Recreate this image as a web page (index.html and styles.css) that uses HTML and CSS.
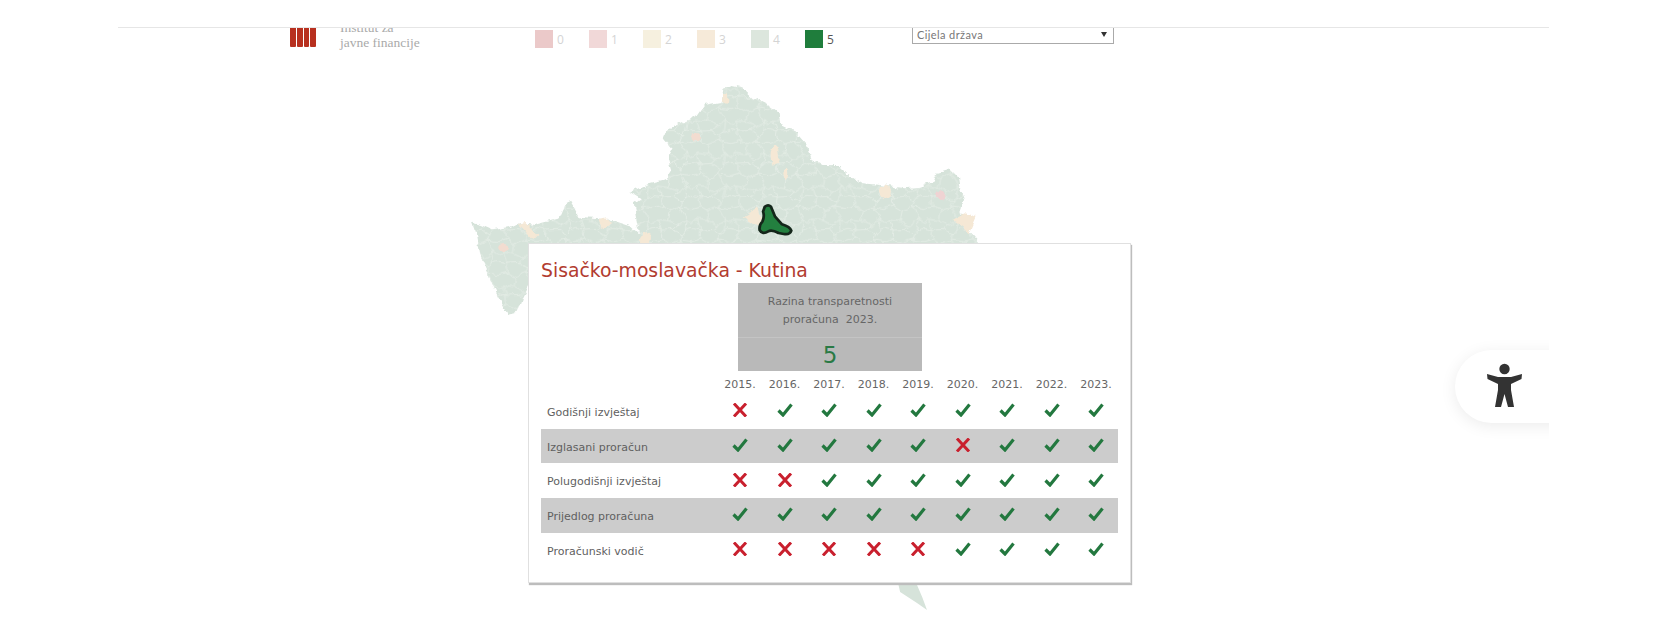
FILE: index.html
```html
<!DOCTYPE html>
<html lang="hr">
<head>
  <meta charset="UTF-8">
  <title>Transparentnost proračuna</title>
  <link rel="stylesheet" href="styles.css">
</head>
<body>
  <svg class="defs" width="0" height="0">
    <symbol id="yes" viewBox="0 0 16 14"><path d="M1.5 7.5 L6 12 L14.5 1.5" fill="none" stroke="#23783f" stroke-width="3.2"/></symbol>
    <symbol id="no" viewBox="0 0 16 14"><path d="M2 0.5 L14 13.5 M14 0.5 L2 13.5" fill="none" stroke="#c9202e" stroke-width="3"/></symbol>
    <path id="shape" d="M35 455 L60 462 L100 480 L150 470 L175 458 L215 465 L290 445 L300 420 L305 400 L320 392 L330 410 L345 440 L400 445 L440 450 L500 470 L520 490 L510 440 L505 400 L525 385 L495 365 L540 345 L600 330 L615 305 L605 270 L620 240 L590 205 L600 180 L640 160 L690 135 L710 105 L760 95 L765 55 L790 45 L815 50 L850 85 L900 110 L925 130 L930 165 L980 190 L1010 225 L1020 270 L1050 285 L1100 285 L1125 310 L1170 340 L1220 345 L1290 355 L1340 350 L1370 340 L1385 305 L1420 295 L1445 320 L1450 350 L1465 385 L1450 430 L1495 440 L1480 490 L1505 520 L1400 760 L800 760 L200 640 L180 680 L165 725 L140 732 L110 680 L85 620 L60 560 L50 500 Z"/>
    <pattern id="cells" width="170" height="150" patternUnits="userSpaceOnUse" patternTransform="scale(.66)">
      <path d="M0 30 L40 18 L75 40 L120 22 L170 30 M40 18 L32 0 M120 22 L128 0 M75 40 L68 85 L20 78 L0 95 M68 85 L110 105 L150 80 L170 95 M120 22 L150 80 M20 78 L36 128 L32 150 M36 128 L0 120 M36 128 L90 125 L110 105 M90 125 L128 150 M150 80 L142 130 L170 120 M142 130 L128 150" fill="none" stroke="#e6eee8" stroke-width="3.4"/>
    </pattern>
    <filter id="wobble" x="-5%" y="-5%" width="110%" height="110%">
      <feTurbulence type="fractalNoise" baseFrequency="0.035" numOctaves="3" seed="4"/>
      <feDisplacementMap in="SourceGraphic" scale="22" xChannelSelector="R" yChannelSelector="G"/>
      <feGaussianBlur stdDeviation="1.2"/>
    </filter>
  </svg>

  <div class="frame">
    <div class="topbar">
      <div class="logo"><i></i><i></i><i></i><i></i></div>
      <div class="brand">Institut za<br>javne financije</div>
      <div class="legend">
        <div class="legend-item"><span class="swatch s0"></span>0</div>
        <div class="legend-item"><span class="swatch s1"></span>1</div>
        <div class="legend-item"><span class="swatch s2"></span>2</div>
        <div class="legend-item"><span class="swatch s3"></span>3</div>
        <div class="legend-item"><span class="swatch s4"></span>4</div>
        <div class="legend-item active"><span class="swatch s5"></span>5</div>
      </div>
      <div class="select">Cijela država<span class="arrow"></span></div>
    </div>

    <svg class="map" viewBox="0 0 1568 1680" preserveAspectRatio="none">
      <g filter="url(#wobble)">
        <use href="#shape" fill="#d6e3da"/>
        <use href="#shape" fill="url(#cells)"/>
        <g fill="#f5e8d5">
          <ellipse cx="770" cy="88" rx="9" ry="13"/>
          <ellipse cx="683" cy="200" rx="11" ry="14" fill="#f2dcd0"/>
          <ellipse cx="914" cy="255" rx="15" ry="30"/>
          <ellipse cx="946" cy="310" rx="7" ry="17"/>
          <ellipse cx="1236" cy="367" rx="18" ry="20"/>
          <ellipse cx="1396" cy="375" rx="15" ry="12" fill="#efd3d3"/>
          <path d="M1430 450 L1465 430 L1500 440 L1480 490 L1460 470 Z"/>
          <path d="M820 440 L870 415 L885 470 L850 465 Z"/>
          <path d="M520 505 L535 482 L555 495 L550 525 L520 525 Z"/>
          <path d="M405 448 L425 442 L440 462 L415 475 Z"/>
          <path d="M168 462 L190 456 L225 495 L210 510 Z"/>
          <ellipse cx="125" cy="533" rx="14" ry="11" fill="#f2dcd0"/>
        </g>
      </g>
      <path d="M1272 1539 L1327 1545 L1342 1581 L1356 1620 L1327 1599 L1278 1566 Z" fill="#d6e3da"/>
      <path d="M885 410 Q895 402 903 410 L915 440 L935 463 Q958 470 962 482 Q958 495 940 492 L925 489 Q905 478 895 484 Q878 495 870 480 Q868 465 878 455 Q885 440 880 425 Z" fill="#23803f" stroke="#14261a" stroke-width="8" stroke-linejoin="round"/>
    </svg>

    <div class="card">
      <h1 class="title">Sisačko-moslavačka - Kutina</h1>
      <div class="score">
        <div class="score-label">Razina transparetnosti<br>proračuna&nbsp; 2023.</div>
        <div class="score-value">5</div>
      </div>
      <div class="row years">
        <span></span>
        <span>2015.</span><span>2016.</span><span>2017.</span><span>2018.</span><span>2019.</span><span>2020.</span><span>2021.</span><span>2022.</span><span>2023.</span>
      </div>
      <div class="row">
        <span class="name">Godišnji izvještaj</span>
        <svg class="mark"><use href="#no"/></svg><svg class="mark"><use href="#yes"/></svg><svg class="mark"><use href="#yes"/></svg><svg class="mark"><use href="#yes"/></svg><svg class="mark"><use href="#yes"/></svg><svg class="mark"><use href="#yes"/></svg><svg class="mark"><use href="#yes"/></svg><svg class="mark"><use href="#yes"/></svg><svg class="mark"><use href="#yes"/></svg>
      </div>
      <div class="row shaded">
        <span class="name">Izglasani proračun</span>
        <svg class="mark"><use href="#yes"/></svg><svg class="mark"><use href="#yes"/></svg><svg class="mark"><use href="#yes"/></svg><svg class="mark"><use href="#yes"/></svg><svg class="mark"><use href="#yes"/></svg><svg class="mark"><use href="#no"/></svg><svg class="mark"><use href="#yes"/></svg><svg class="mark"><use href="#yes"/></svg><svg class="mark"><use href="#yes"/></svg>
      </div>
      <div class="row">
        <span class="name">Polugodišnji izvještaj</span>
        <svg class="mark"><use href="#no"/></svg><svg class="mark"><use href="#no"/></svg><svg class="mark"><use href="#yes"/></svg><svg class="mark"><use href="#yes"/></svg><svg class="mark"><use href="#yes"/></svg><svg class="mark"><use href="#yes"/></svg><svg class="mark"><use href="#yes"/></svg><svg class="mark"><use href="#yes"/></svg><svg class="mark"><use href="#yes"/></svg>
      </div>
      <div class="row shaded">
        <span class="name">Prijedlog proračuna</span>
        <svg class="mark"><use href="#yes"/></svg><svg class="mark"><use href="#yes"/></svg><svg class="mark"><use href="#yes"/></svg><svg class="mark"><use href="#yes"/></svg><svg class="mark"><use href="#yes"/></svg><svg class="mark"><use href="#yes"/></svg><svg class="mark"><use href="#yes"/></svg><svg class="mark"><use href="#yes"/></svg><svg class="mark"><use href="#yes"/></svg>
      </div>
      <div class="row">
        <span class="name">Proračunski vodič</span>
        <svg class="mark"><use href="#no"/></svg><svg class="mark"><use href="#no"/></svg><svg class="mark"><use href="#no"/></svg><svg class="mark"><use href="#no"/></svg><svg class="mark"><use href="#no"/></svg><svg class="mark"><use href="#yes"/></svg><svg class="mark"><use href="#yes"/></svg><svg class="mark"><use href="#yes"/></svg><svg class="mark"><use href="#yes"/></svg>
      </div>
    </div>

    <div class="a11y">
      <svg class="a11y-icon" viewBox="0 0 35 44">
        <circle cx="17.5" cy="6" r="5.2"/>
        <path d="M0 11 L11 14 H24 L35 11 L34.5 16 L24 21 V27 L27 44 H21 L17.5 31 L14 44 H8 L11 27 V21 L0.5 16 Z"/>
      </svg>
    </div>
  </div>
</body>
</html>
```

FILE: styles.css
```css
body {
  margin: 0;
  height: 624px;
  overflow: hidden;
  background: #fff;
  font-family: "DejaVu Sans", sans-serif;
}

.defs {
  position: absolute;
}

.frame {
  position: relative;
  margin: 27px 0 0 118px;
  width: 1431px;
  height: 597px;
  overflow: hidden;
}

/* top strip, the page above it scrolled away */
.topbar {
  display: flex;
  align-items: flex-start;
  height: 24px;
  padding-left: 172px;
  border-top: 1px solid #e6e6e6;
  overflow: hidden;
}

.logo {
  display: flex;
  gap: 1px;
  width: 26px;
  height: 19px;
}

.logo i {
  flex: 1;
  background: #b8301f;
  border-radius: 0 0 1px 1px;
}

.brand {
  width: 195px;
  margin: -8px 0 0 24px;
  font-family: "Liberation Serif", serif;
  font-size: 13.5px;
  line-height: 15px;
  color: #aaa;
}

.legend {
  display: flex;
  width: 324px;
  margin-top: 2px;
}

.legend-item {
  display: flex;
  align-items: center;
  gap: 4px;
  width: 54px;
  font-family: "Open Sans", sans-serif;
  font-size: 12px;
  color: #d4d4d4;
}

.legend-item.active {
  color: #555;
}

.swatch {
  width: 18px;
  height: 18px;
}

.s0 { background: #ebc9c9; }
.s1 { background: #f1d8d8; }
.s2 { background: #f6f0df; }
.s3 { background: #f6ead9; }
.s4 { background: #dce6dd; }
.s5 { background: #1f7d3c; }

.select {
  display: flex;
  align-items: center;
  justify-content: space-between;
  box-sizing: border-box;
  width: 202px;
  height: 16px;
  margin-left: 53px;
  padding: 0 6px 2px 4px;
  border: 1px solid #aaa;
  border-top: 0;
  font-family: "Lato", sans-serif;
  font-size: 11px;
  letter-spacing: 0.4px;
  color: #777;
}

.arrow {
  border-top: 5px solid #333;
  border-left: 3px solid transparent;
  border-right: 3px solid transparent;
}

.map {
  position: absolute;
  left: 342px;
  top: 43px;
  width: 540px;
  height: 560px;
}

.card {
  position: absolute;
  left: 410px;
  top: 216px;
  box-sizing: border-box;
  width: 603px;
  height: 340px;
  padding: 1px 12px 0 12px;
  background: #fff;
  border: 1px solid #e0e0e0;
  box-shadow: 1px 2px 1px #bdbdbd;
}

.title {
  height: 38px;
  margin: 0;
  font-size: 18.8px;
  font-weight: normal;
  line-height: 52px;
  color: #b23c30;
  white-space: nowrap;
}

.score {
  box-sizing: border-box;
  width: 184px;
  height: 88px;
  margin-left: 197px;
  background: #b9b9b9;
  text-align: center;
  color: #666;
}

.score-label {
  height: 55px;
  padding-top: 10px;
  box-sizing: border-box;
  border-bottom: 1px solid #c4c4c4;
  font-size: 11px;
  line-height: 18px;
}

.score-value {
  font-size: 23px;
  line-height: 34px;
  color: #2a7a45;
}

.row {
  display: grid;
  grid-template-columns: 176.75px repeat(9, 44.5px);
  align-items: center;
  justify-items: center;
  height: 34.7px;
  font-size: 11px;
  color: #5f5f5f;
}

.row.years {
  box-sizing: border-box;
  height: 23px;
  padding-top: 4px;
  color: #666;
}

.row.shaded {
  background: #cccccc;
}

.name {
  justify-self: start;
  padding: 2px 0 0 6px;
}

.mark {
  width: 16px;
  height: 14px;
  margin-top: -2px;
}

.a11y {
  position: absolute;
  left: 1337px;
  top: 323px;
  display: flex;
  align-items: center;
  width: 134px;
  height: 73px;
  padding: 0 0 3px 32px;
  box-sizing: border-box;
  background: #fff;
  border-radius: 37px 0 0 37px;
  box-shadow: 0 3px 16px rgba(0, 0, 0, 0.08);
}

.a11y-icon {
  width: 35px;
  height: 44px;
  fill: #333;
}
```
